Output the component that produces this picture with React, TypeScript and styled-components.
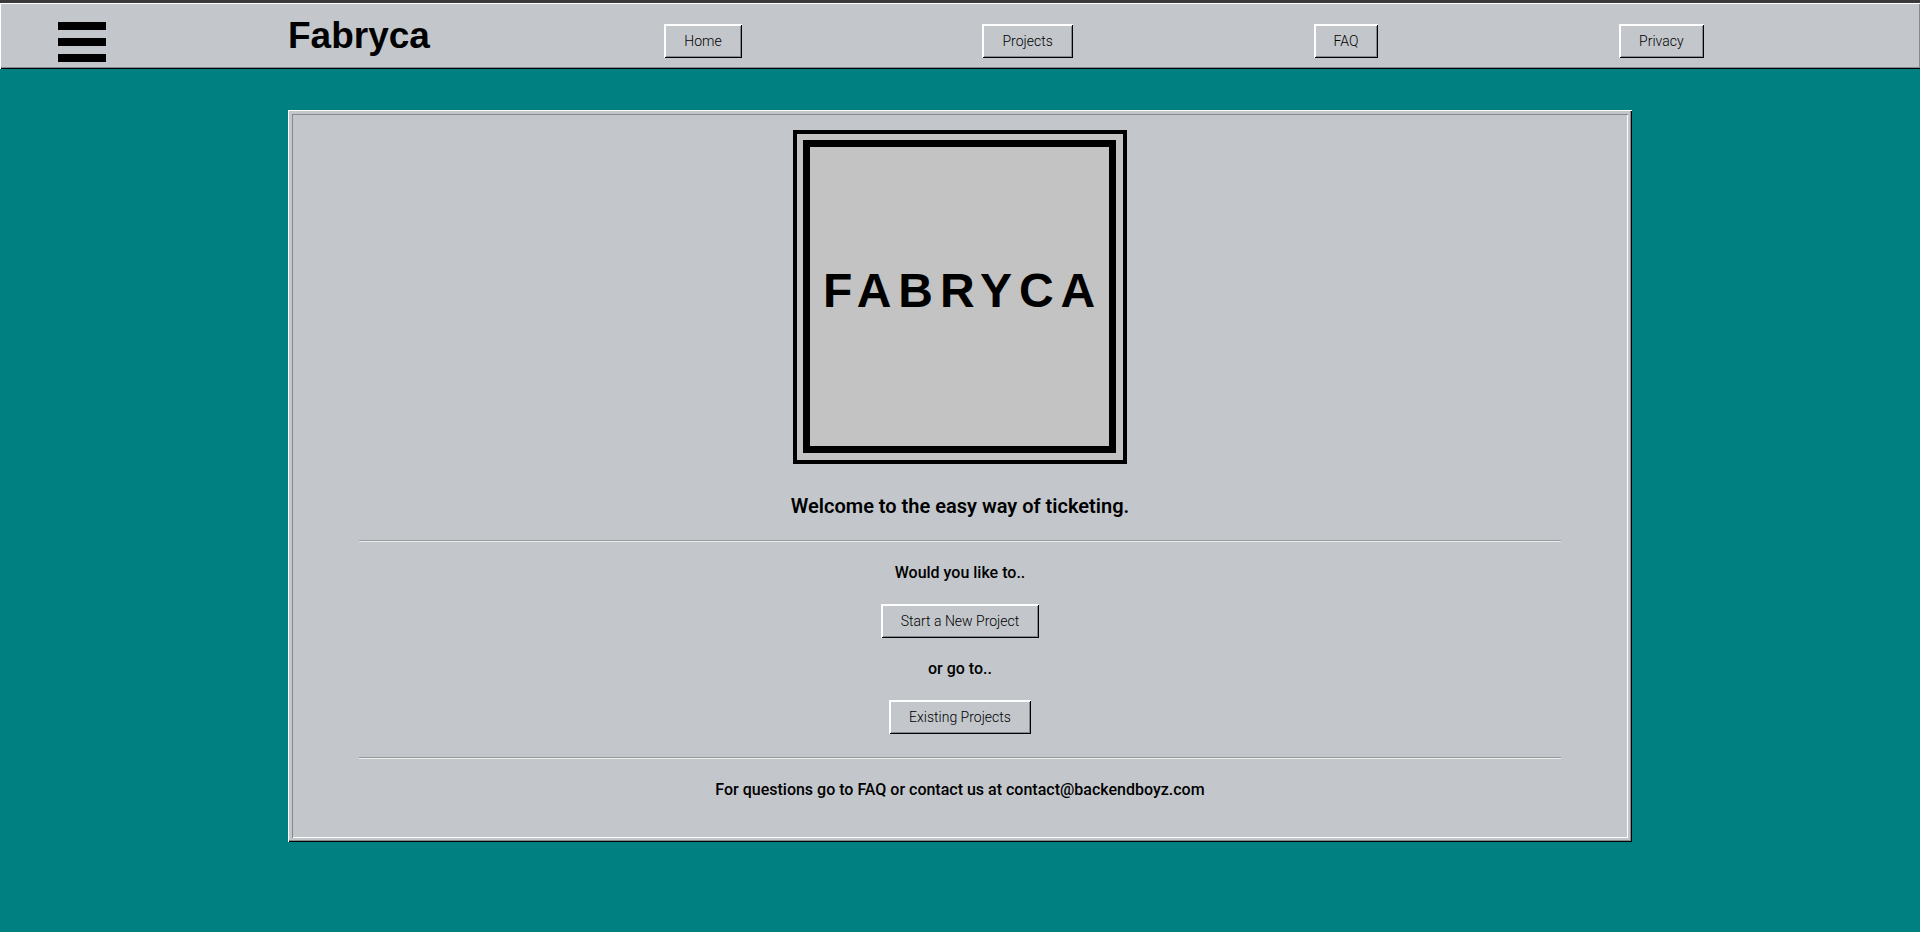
import React from 'react';
import styled, { createGlobalStyle } from 'styled-components';

const GlobalStyle = createGlobalStyle`
  * { box-sizing: border-box; }
  body {
    margin: 0;
    background: #008080;
    color: #000;
    font-family: Roboto, "Liberation Sans", sans-serif;
  }
`;

const Header = styled.header`
  display: grid;
  grid-template-columns: 9fr 10fr 50fr;
  align-items: start;
  height: 69px;
  padding: 12px 5% 0 3%;
  border-top: 3px solid #3a3a3c;
  background: #c3c7cb;
  box-shadow:
    inset 1px 1px #fff,
    inset 0 -1px #000,
    inset -1px -2px #868a8e;
`;

const MenuButton = styled.button`
  display: flex;
  flex-direction: column;
  gap: 8px;
  width: 48px;
  margin-top: 7px;
  padding: 0;
  border: 0;
  background: none;
`;

const MenuBar = styled.span`
  width: 100%;
  height: 8px;
  background: #000;
`;

const Brand = styled.h1`
  margin: 0;
  font: bold 37px/42px "Liberation Sans", Arial, sans-serif;
`;

const Nav = styled.nav`
  display: flex;
  justify-content: space-around;
  padding-top: 9px;
`;

const Button = styled.button`
  height: 34px;
  padding: 0 20px;
  border: 0;
  background: #c3c7cb;
  color: #000;
  font: 300 14px/20px Roboto, "Liberation Sans", sans-serif;
  box-shadow:
    inset 1px 1px #fff,
    inset -1px -1px #000,
    inset 2px 2px #fff,
    inset -2px -2px #868a8e;
`;

const Panel = styled.main`
  display: flex;
  flex-direction: column;
  align-items: center;
  width: 70%;
  margin: 41px auto;
  padding: 20px 71px 21px;
  background: #c3c7cb;
  box-shadow:
    inset 1px 1px #fff,
    inset -1px -1px #000,
    inset -2px -2px #868a8e,
    inset 4px 4px #c3c7cb,
    inset -4px -4px #c3c7cb,
    inset 5px 5px #868a8e,
    inset -5px -5px #fff;
`;

const Logo = styled.svg`
  display: block;
  width: 334px;
  height: 334px;
`;

const Welcome = styled.h2`
  margin: 28px 0 20px;
  font-size: 20px;
  line-height: 28px;
  font-weight: 600;
`;

const Prompt = styled.p`
  margin: 19px 0;
  font-size: 16px;
  line-height: 24px;
  font-weight: 500;
`;

const Divider = styled.hr`
  width: 100%;
  height: 2px;
  margin: 0;
  border: 0;
  border-top: 1px solid #97999b;
  background: #eee;
`;

const Choices = styled.section`
  display: flex;
  flex-direction: column;
  align-items: center;
  padding-bottom: 23px;
`;

const links = ['Home', 'Projects', 'FAQ', 'Privacy'];

export default function App() {
  return (
    <>
      <GlobalStyle />
      <Header>
        <MenuButton type="button" aria-label="Menu">
          <MenuBar />
          <MenuBar />
          <MenuBar />
        </MenuButton>
        <Brand>Fabryca</Brand>
        <Nav>
          {links.map((label) => (
            <Button key={label} type="button">{label}</Button>
          ))}
        </Nav>
      </Header>
      <Panel>
        <Logo viewBox="0 0 334 334" role="img" aria-label="Fabryca logo">
          <rect width="334" height="334" fill="#000" />
          <rect x="4" y="4" width="326" height="326" fill="#c3c3c3" />
          <rect x="10" y="10" width="313" height="313" fill="#000" />
          <rect x="17" y="17" width="299" height="299" fill="#c3c3c3" />
          <text x="30" y="177" fontFamily="'Liberation Sans', Arial, sans-serif" fontWeight="700" fontSize="48" letterSpacing="7">
            FABRYCA
          </text>
        </Logo>
        <Welcome>Welcome to the easy way of ticketing.</Welcome>
        <Divider />
        <Choices>
          <Prompt>Would you like to..</Prompt>
          <Button type="button">Start a New Project</Button>
          <Prompt>or go to..</Prompt>
          <Button type="button">Existing Projects</Button>
        </Choices>
        <Divider />
        <Prompt>For questions go to FAQ or contact us at contact@backendboyz.com</Prompt>
      </Panel>
    </>
  );
}
